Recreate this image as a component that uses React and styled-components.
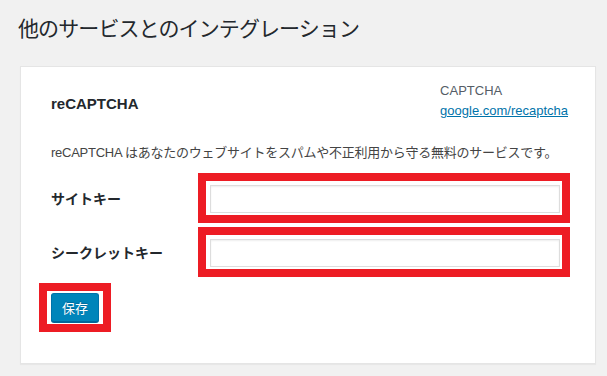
import React from 'react';
import styled, { createGlobalStyle } from 'styled-components';

const GlobalStyle = createGlobalStyle`
    html, body {
        margin: 0;
        padding: 0;
        background-color: #f1f1f1;
    }
    body {
        font-family: 'Liberation Sans', 'Noto Sans CJK JP', sans-serif;
        font-size: 13px;
        color: #444;
    }
`;

const Page = styled.div`
    padding: 12px 11px 14px 20px;
`;

const Title = styled.h1`
    margin: 0 0 0 -2px;
    font-family: 'Noto Sans CJK JP', sans-serif;
    font-size: 21px;
    font-weight: 400;
    letter-spacing: -0.9px;
    line-height: 30px;
    color: #23282d;
`;

const Card = styled.div`
    margin-top: 24px;
    width: 576px;
    box-sizing: border-box;
    padding: 14px 27px 31px 30px;
    background-color: #fff;
    border: 1px solid #e5e5e5;
    box-shadow: 0 1px 1px rgba(0, 0, 0, 0.04);
`;

const CardHeader = styled.div`
    display: flex;
    justify-content: space-between;
    align-items: center;
`;

const ServiceName = styled.h2`
    margin: 4px 0 0 0;
    font-size: 15px;
    font-weight: 700;
    color: #23282d;
`;

const Meta = styled.div`
    display: flex;
    flex-direction: column;
    line-height: 20px;
    color: #555d66;
`;

const MetaLink = styled.a`
    color: #0073aa;
    text-decoration: underline;
`;

const Description = styled.p`
    margin: 22px 0 10px 0;
    line-height: 20px;
    white-space: nowrap;
    letter-spacing: -0.25px;
    color: #444;
`;

const Row = styled.div`
    display: flex;
    align-items: center;
    margin-bottom: 4px;
`;

const Label = styled.label`
    width: 147px;
    flex-shrink: 0;
    font-size: 14px;
    font-weight: 700;
    color: #23282d;
`;

const Highlight = styled.div`
    display: inline-block;
    border: 8px solid #ed1c24;
    padding: ${(props) => props.$pad || '4px 2px 2px 4px'};
    line-height: 0;
`;

const TextInput = styled.input`
    width: 350px;
    height: 28px;
    box-sizing: border-box;
    margin: 0;
    padding: 3px 5px;
    border: 1px solid #ddd;
    border-radius: 0;
    box-shadow: inset 0 1px 2px rgba(0, 0, 0, 0.07);
    background-color: #fff;
    font: inherit;
    :focus {
        outline: none;
    }
`;

const Actions = styled.div`
    margin: 6px 0 0 -12px;
`;

const Button = styled.button`
    width: 48px;
    height: 29px;
    margin: 0;
    padding: 0;
    border: 1px solid #0073aa;
    border-bottom-color: #006799;
    border-radius: 3px;
    background-color: #0085ba;
    box-shadow: 0 1px 0 #006799;
    color: #fff;
    font-family: 'Noto Sans CJK JP', sans-serif;
    font-size: 13px;
    line-height: 26px;
    text-shadow: 0 -1px 1px #006799;
    cursor: pointer;
`;

export default function App() {
    return (
        <>
            <GlobalStyle />
            <Page>
                <Title>他のサービスとのインテグレーション</Title>
                <Card>
                    <CardHeader>
                        <ServiceName>reCAPTCHA</ServiceName>
                        <Meta>
                            <span>CAPTCHA</span>
                            <MetaLink href="#">google.com/recaptcha</MetaLink>
                        </Meta>
                    </CardHeader>
                    <Description>
                        reCAPTCHA はあなたのウェブサイトをスパムや不正利用から守る無料のサービスです。
                    </Description>
                    <Row>
                        <Label>サイトキー</Label>
                        <Highlight>
                            <TextInput type="text" />
                        </Highlight>
                    </Row>
                    <Row>
                        <Label>シークレットキー</Label>
                        <Highlight>
                            <TextInput type="text" />
                        </Highlight>
                    </Row>
                    <Actions>
                        <Highlight $pad="2px 4px">
                            <Button type="button">保存</Button>
                        </Highlight>
                    </Actions>
                </Card>
            </Page>
        </>
    );
}
